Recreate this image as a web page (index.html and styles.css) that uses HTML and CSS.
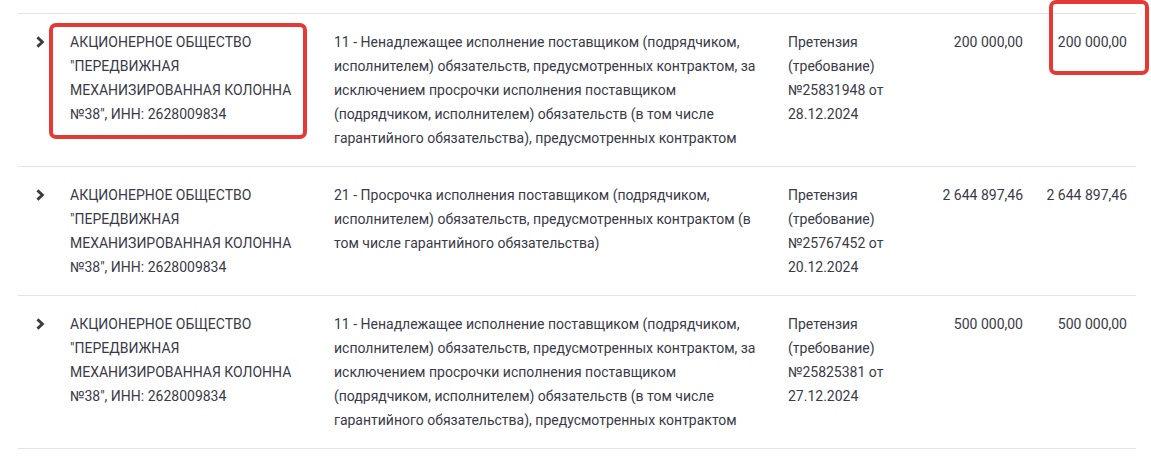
FILE: index.html
```html
<!DOCTYPE html>
<html lang="ru">
<head>
<meta charset="utf-8">
<link rel="stylesheet" href="styles.css">
</head>
<body>
<div class="page">
  <div class="table">
    <div class="row">
      <div class="cell chev"><svg width="10" height="12" viewBox="0 0 10 12"><path d="M2.4 1.4 L7.4 6 L2.4 10.6" fill="none" stroke="#3b3b40" stroke-width="2.8"/></svg></div>
      <div class="cell company">АКЦИОНЕРНОЕ ОБЩЕСТВО "ПЕРЕДВИЖНАЯ МЕХАНИЗИРОВАННАЯ КОЛОННА №38", ИНН: 2628009834</div>
      <div class="cell reason">11 - Ненадлежащее исполнение поставщиком (подрядчиком, исполнителем) обязательств, предусмотренных контрактом, за исключением просрочки исполнения поставщиком (подрядчиком, исполнителем) обязательств (в том числе гарантийного обязательства), предусмотренных контрактом</div>
      <div class="cell doc">Претензия (требование) №25831948 от 28.12.2024</div>
      <div class="cell num">200 000,00</div>
      <div class="cell num">200 000,00</div>
    </div>
    <div class="row">
      <div class="cell chev"><svg width="10" height="12" viewBox="0 0 10 12"><path d="M2.4 1.4 L7.4 6 L2.4 10.6" fill="none" stroke="#3b3b40" stroke-width="2.8"/></svg></div>
      <div class="cell company">АКЦИОНЕРНОЕ ОБЩЕСТВО "ПЕРЕДВИЖНАЯ МЕХАНИЗИРОВАННАЯ КОЛОННА №38", ИНН: 2628009834</div>
      <div class="cell reason">21 - Просрочка исполнения поставщиком (подрядчиком, исполнителем) обязательств, предусмотренных контрактом (в том числе гарантийного обязательства)</div>
      <div class="cell doc">Претензия (требование) №25767452 от 20.12.2024</div>
      <div class="cell num">2 644 897,46</div>
      <div class="cell num">2 644 897,46</div>
    </div>
    <div class="row">
      <div class="cell chev"><svg width="10" height="12" viewBox="0 0 10 12"><path d="M2.4 1.4 L7.4 6 L2.4 10.6" fill="none" stroke="#3b3b40" stroke-width="2.8"/></svg></div>
      <div class="cell company">АКЦИОНЕРНОЕ ОБЩЕСТВО "ПЕРЕДВИЖНАЯ МЕХАНИЗИРОВАННАЯ КОЛОННА №38", ИНН: 2628009834</div>
      <div class="cell reason">11 - Ненадлежащее исполнение поставщиком (подрядчиком, исполнителем) обязательств, предусмотренных контрактом, за исключением просрочки исполнения поставщиком (подрядчиком, исполнителем) обязательств (в том числе гарантийного обязательства), предусмотренных контрактом</div>
      <div class="cell doc">Претензия (требование) №25825381 от 27.12.2024</div>
      <div class="cell num">500 000,00</div>
      <div class="cell num">500 000,00</div>
    </div>
  </div>
  <div class="mark mark-company"></div>
  <div class="mark mark-sum"></div>
</div>
</body>
</html>
```

FILE: styles.css
```css
html, body {
  margin: 0;
  padding: 0;
  background: #ffffff;
}
.page {
  position: relative;
  width: 1151px;
  height: 462px;
  overflow: hidden;
  padding-top: 13px;
  box-sizing: border-box;
  font-family: Roboto, "Liberation Sans", sans-serif;
  font-size: 14px;
  line-height: 24px;
  color: #3a3a48;
}
.table {
  margin-left: 18px;
  width: 1118px;
  border-top: 1px solid #e4e3ec;
}
.row {
  display: grid;
  grid-template-columns: 52px 264px 454px 120px 115px 104px;
  padding: 16px 9px 16px 0;
  border-bottom: 1px solid #e4e3ec;
}
.cell {
  min-width: 0;
}
.chev {
  padding-left: 17px;
  padding-top: 6px;
  line-height: 0;
}
.company {
  padding-right: 32px;
}
.reason {
  padding-right: 26px;
}
.num {
  text-align: right;
  white-space: nowrap;
}
.mark {
  position: absolute;
  border: 4px solid #e53935;
  border-radius: 7px;
  box-sizing: border-box;
}
.mark-company {
  left: 49px;
  top: 23px;
  width: 258px;
  height: 116px;
}
.mark-sum {
  left: 1049px;
  top: 0;
  width: 100px;
  height: 75px;
}
```
